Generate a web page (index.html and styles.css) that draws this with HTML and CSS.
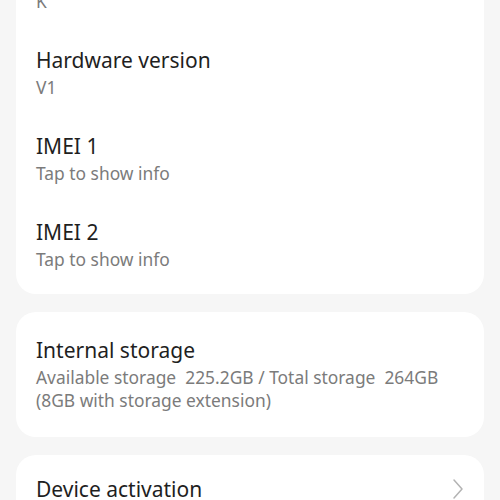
FILE: index.html
```html
<!DOCTYPE html>
<html lang="en">
<head>
    <meta charset="UTF-8">
    <meta name="viewport" content="width=device-width, initial-scale=1.0">
    <title>About phone</title>
    <link rel="stylesheet" href="styles.css">
</head>
<body>

    <div class="page">
        <div class="card card-top">
            <div class="item">
                <div class="item-title">Model</div>
                <div class="item-sub">K</div>
            </div>
            <div class="item">
                <div class="item-title">Hardware version</div>
                <div class="item-sub">V1</div>
            </div>
            <div class="item">
                <div class="item-title">IMEI 1</div>
                <div class="item-sub">Tap to show info</div>
            </div>
            <div class="item">
                <div class="item-title">IMEI 2</div>
                <div class="item-sub">Tap to show info</div>
            </div>
        </div>

        <div class="card card-storage">
            <div class="item">
                <div class="item-title">Internal storage</div>
                <div class="item-sub">Available storage&nbsp; 225.2GB / Total storage&nbsp; 264GB<br>(8GB with storage extension)</div>
            </div>
        </div>

        <div class="card card-link">
            <div class="item item-row">
                <div class="item-title">Device activation</div>
                <svg class="chevron" width="12" height="22" viewBox="0 0 12 22">
                    <path d="M2 2 L10 11 L2 20" fill="none" stroke="#b3b3b3" stroke-width="1.5" stroke-linecap="round" stroke-linejoin="round"/>
                </svg>
            </div>
        </div>
    </div>

</body>
</html>
```

FILE: styles.css
```css
body {
    margin: 0;
    background-color: #f6f6f6;
    font-family: "Noto Sans", Roboto, sans-serif;
    overflow: hidden;
}

.page {
    padding: 0 16px;
    display: flex;
    flex-direction: column;
    gap: 18px;
}

.card {
    background-color: #ffffff;
    border-radius: 20px;
    padding: 0 20px;
}

/* list card scrolled partly out of view */
.card-top {
    margin-top: -57px;
    padding-bottom: 7px;
}

.item {
    padding: 17px 0 16px;
}

.item-title {
    font-size: 21px;
    line-height: 28px;
    color: #1f1f1f;
}

.item-sub {
    font-size: 17.4px;
    line-height: 23px;
    margin-top: 2px;
    color: #7b7b7b;
}

.card-storage .item {
    padding: 24px 0 25px;
}

.item-row {
    display: flex;
    align-items: center;
    justify-content: space-between;
    padding-top: 20px;
}
```
